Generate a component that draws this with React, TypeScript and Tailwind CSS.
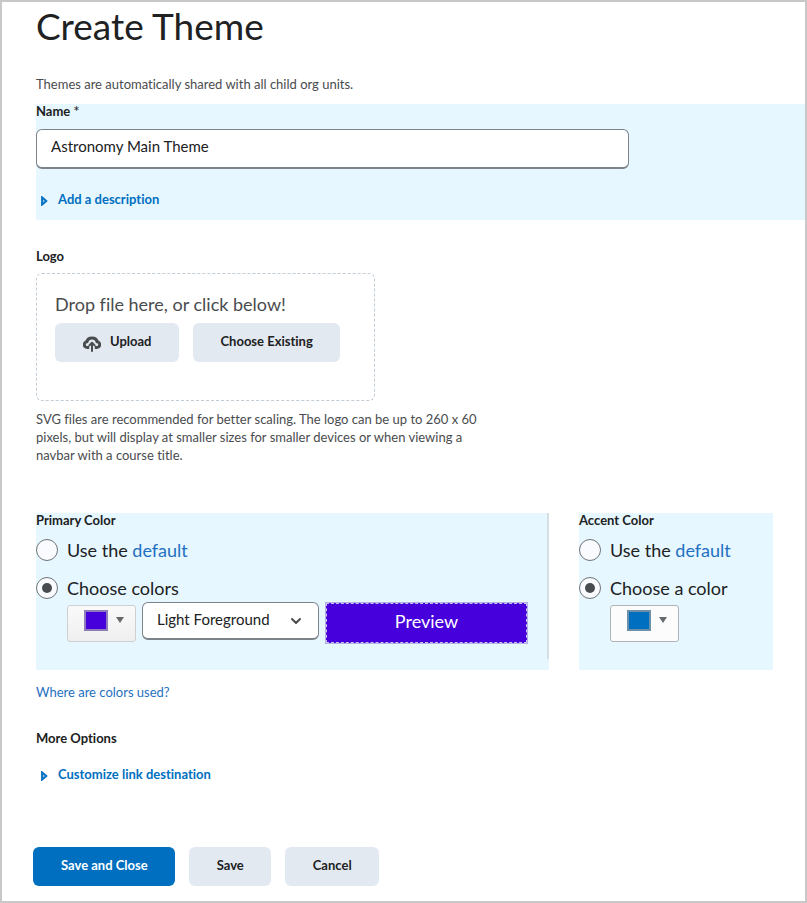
import { useState } from "react"
import type { ReactNode } from "react"
import { ChevronDown } from "lucide-react"

type ButtonProps = {
    children: ReactNode
    primary?: boolean
}

const Button = ({ children, primary = false }: ButtonProps) => {
    return (
        <button
            type="button"
            className={`flex h-[39px] cursor-pointer items-center rounded-md pr-[27px] pb-0.5 pl-7 text-[13px] font-bold ${primary ? "bg-[#006fbf] text-white" : "bg-[#e3e9f1] text-[#202122]"}`}
        >
            {children}
        </button>
    )
}

const UploadIcon = () => {
    return (
        <svg width="18" height="16" viewBox="0 0 18 16" fill="none" stroke="#494c4e" strokeLinejoin="round" className="mt-1 mr-[9px]">
            <path d="M6.2 11.4H4.2A2.8 2.8 0 0 1 4 5.8C4.3 3.6 6.4 2 9 2s4.7 1.6 5 3.8a2.8 2.8 0 0 1-.2 5.6h-2" strokeWidth="3" />
            <path d="M9 15V7.4M6.4 9.4 9 6.8l2.6 2.6" strokeWidth="2" strokeLinecap="round" />
        </svg>
    )
}

const ExpandLink = ({ children }: { children: ReactNode }) => {
    return (
        <a href="#" className="flex items-center text-[13px] leading-[18px] font-bold text-[#006fbf]">
            <svg width="7" height="10" viewBox="0 0 7 10" className="mt-1 mr-[10px] ml-[5px]">
                <path d="M1 1.2v7.6L5.4 5z" fill="#8cc4ee" stroke="#006fbf" strokeWidth="1.8" />
            </svg>
            {children}
        </a>
    )
}

type RadioProps = {
    id: string
    name: string
    checked: boolean
    onChange: () => void
    children: ReactNode
}

const Radio = ({ id, name, checked, onChange, children }: RadioProps) => {
    return (
        <div className="flex items-center gap-[9px]">
            <input
                type="radio"
                id={id}
                name={name}
                checked={checked}
                onChange={onChange}
                className="grid size-[22px] shrink-0 appearance-none place-content-center rounded-full border border-[#6e7376] bg-[#f9fbff] checked:before:size-[10px] checked:before:rounded-full checked:before:bg-[#494c4e] checked:before:content-['']"
            />
            <label htmlFor={id} className="text-[18px] leading-[22px]">{children}</label>
        </div>
    )
}

const ColorPicker = ({ color, label }: { color: "primary" | "accent"; label: string }) => {
    return (
        <button
            type="button"
            aria-label={label}
            className={`mt-[3px] flex h-[37px] w-[69px] shrink-0 cursor-pointer justify-center gap-2 rounded-[3px] border pt-1 pl-1 ${color === "primary" ? "border-[#cdd0d2] bg-linear-to-b from-[#fafafa] to-[#efefef]" : "border-[#b0b3b5] bg-[#fcfcfc]"}`}
        >
            <span className={`h-[21px] w-6 border-2 ${color === "primary" ? "border-[#8f7dbb] bg-[#4600db]" : "border-[#6d90aa] bg-[#006fbf]"}`} />
            <svg width="8" height="6" viewBox="0 0 8 6" className="mt-[7px]">
                <path d="M0 0h8L4 6z" fill="#65696b" />
            </svg>
        </button>
    )
}

const DefaultLink = () => <a href="#" className="text-[#1f70c1]">default</a>

export default function App() {
    const [name, setName] = useState("Astronomy Main Theme")
    const [primary, setPrimary] = useState("custom")
    const [accent, setAccent] = useState("custom")

    return (
        <main className="min-h-screen border-2 border-[#c8c8c8] bg-white pb-[15px] pl-[34px] font-['Lato',sans-serif] text-[#202122] [font-variant-ligatures:none]">
            <h1 className="pt-1 text-[37px] leading-10">Create Theme</h1>
            <p className="mt-[29px] text-[13px] leading-[18px] text-[#494c4e]">Themes are automatically shared with all child org units.</p>

            <section className="mt-[11px] bg-[#e6f7ff] pb-3">
                <label htmlFor="theme-name" className="flex gap-[3px] text-[13px] leading-[14px] font-bold">
                    Name <span className="text-[15px] font-normal">*</span>
                </label>
                <input
                    id="theme-name"
                    type="text"
                    value={name}
                    onChange={(e) => setName(e.target.value)}
                    className="mt-[11px] mb-[21px] block h-10 w-full max-w-[593px] rounded-md border border-b-2 border-[#7c8489] bg-white px-[14px] pb-[5px] text-[15px]"
                />
                <ExpandLink>Add a description</ExpandLink>
            </section>

            <section className="mt-[27px]">
                <h2 className="text-[13px] leading-[18px] font-bold">Logo</h2>
                <div className="mt-2 h-32 max-w-[339px] rounded-md border border-dashed border-[#c2ccd5] pt-[19px] pl-[18px]">
                    <p className="text-[18px] leading-[22px] text-[#494c4e]">Drop file here, or click below!</p>
                    <div className="mt-2 flex gap-[14px]">
                        <Button><UploadIcon />Upload</Button>
                        <Button>Choose Existing</Button>
                    </div>
                </div>
                <p className="mt-[9px] max-w-[460px] text-[13px] leading-[18px] text-[#494c4e]">
                    SVG files are recommended for better scaling. The logo can be up to 260 x 60 pixels, but will display at smaller sizes for smaller devices or when viewing a navbar with a course title.
                </p>
            </section>

            <div className="mt-[49px] flex gap-[30px] pr-8">
                <section className="flex flex-1 bg-[#e6f7ff]">
                    <div className="min-w-0 flex-1 pb-[26px]">
                        <h2 className="text-[13px] leading-[14px] font-bold">Primary Color</h2>
                        <div className="mt-3 flex flex-col gap-4">
                            <Radio id="primary-default" name="primary" checked={primary === "default"} onChange={() => setPrimary("default")}>
                                Use the <DefaultLink />
                            </Radio>
                            <Radio id="primary-custom" name="primary" checked={primary === "custom"} onChange={() => setPrimary("custom")}>
                                Choose colors
                            </Radio>
                        </div>
                        <div className="mt-[3px] flex items-start gap-[6px] pr-[19px] pl-[31px]">
                            <ColorPicker color="primary" label="Primary color" />
                            <div className="relative shrink-0">
                                <select aria-label="Foreground" className="h-[38px] w-[177px] appearance-none rounded-md border border-b-2 border-[#7c8489] bg-white px-[14px] pb-0.5 text-[15px]">
                                    <option>Light Foreground</option>
                                    <option>Dark Foreground</option>
                                </select>
                                <ChevronDown size={16} strokeWidth={3} className="pointer-events-none absolute top-[11px] right-[15px] text-[#494c4e]" />
                            </div>
                            <div className="h-[42px] flex-1 border border-[#b3aee3] bg-[#4600db] text-center text-[18px] leading-9 text-white outline-1 -outline-offset-2 outline-dashed outline-[#c9c4ee]">Preview</div>
                        </div>
                    </div>
                    <div className="mb-[11px] w-0.5 bg-[#d5dde5]" />
                </section>

                <section className="w-[194px] bg-[#e6f7ff]">
                    <h2 className="text-[13px] leading-[14px] font-bold">Accent Color</h2>
                    <div className="mt-3 flex flex-col gap-4">
                        <Radio id="accent-default" name="accent" checked={accent === "default"} onChange={() => setAccent("default")}>
                            Use the <DefaultLink />
                        </Radio>
                        <Radio id="accent-custom" name="accent" checked={accent === "custom"} onChange={() => setAccent("custom")}>
                            Choose a color
                        </Radio>
                    </div>
                    <div className="mt-[3px] flex pl-[31px]">
                        <ColorPicker color="accent" label="Accent color" />
                    </div>
                </section>
            </div>

            <a href="#" className="mt-[13px] block text-[13px] leading-[18px] text-[#1f70c1]">Where are colors used?</a>

            <section className="mt-7">
                <h2 className="mb-[18px] text-[13px] leading-[18px] font-bold">More Options</h2>
                <ExpandLink>Customize link destination</ExpandLink>
            </section>

            <footer className="mt-16 -ml-[3px] flex gap-[14px]">
                <Button primary>Save and Close</Button>
                <Button>Save</Button>
                <Button>Cancel</Button>
            </footer>
        </main>
    )
}
